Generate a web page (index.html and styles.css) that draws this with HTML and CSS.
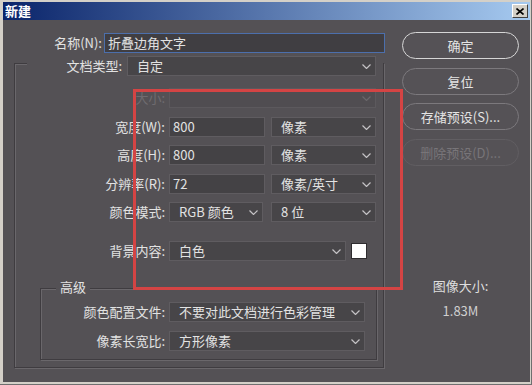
FILE: index.html
```html
<!DOCTYPE html>
<html lang="zh-CN">
<head>
  <meta charset="UTF-8">
  <title>新建</title>
  <link rel="stylesheet" href="styles.css">
</head>
<body>
  <div class="window">
    <div class="titlebar">
      <span class="title">新建</span>
      <span class="close">
        <svg viewBox="0 0 8 7" width="8" height="7"><path d="M0.5 0.5l7 6M7.5 0.5l-7 6"/></svg>
      </span>
    </div>

    <div class="dialog">
      <div class="main">
        <div class="row">
          <label class="lbl lbl-name">名称(N):</label>
          <div class="field input focused w-name">折叠边角文字</div>
        </div>

        <div class="group">
          <div class="row legend-row">
            <label class="lbl lbl-type">文档类型:</label>
            <div class="field select w-type">自定
              <svg class="chev" viewBox="0 0 9 5"><path d="M0.5 0.5l4 4 4-4"/></svg>
            </div>
          </div>

          <div class="row first-row disabled">
            <label class="lbl lbl-main">大小:</label>
            <div class="field select w-size">
              <svg class="chev" viewBox="0 0 9 5"><path d="M0.5 0.5l4 4 4-4"/></svg>
            </div>
          </div>

          <div class="row tight">
            <label class="lbl lbl-main">宽度(W):</label>
            <div class="field input w-num">800</div>
            <div class="field select w-unit">像素
              <svg class="chev" viewBox="0 0 9 5"><path d="M0.5 0.5l4 4 4-4"/></svg>
            </div>
          </div>

          <div class="row tight">
            <label class="lbl lbl-main">高度(H):</label>
            <div class="field input w-num">800</div>
            <div class="field select w-unit">像素
              <svg class="chev" viewBox="0 0 9 5"><path d="M0.5 0.5l4 4 4-4"/></svg>
            </div>
          </div>

          <div class="row tight">
            <label class="lbl lbl-main">分辨率(R):</label>
            <div class="field input w-num">72</div>
            <div class="field select w-unit">像素/英寸
              <svg class="chev" viewBox="0 0 9 5"><path d="M0.5 0.5l4 4 4-4"/></svg>
            </div>
          </div>

          <div class="row tight">
            <label class="lbl lbl-main">颜色模式:</label>
            <div class="field select w-mode">RGB 颜色
              <svg class="chev" viewBox="0 0 9 5"><path d="M0.5 0.5l4 4 4-4"/></svg>
            </div>
            <div class="field select w-unit wide-gap">8 位
              <svg class="chev" viewBox="0 0 9 5"><path d="M0.5 0.5l4 4 4-4"/></svg>
            </div>
          </div>

          <div class="row bg-row">
            <label class="lbl lbl-main">背景内容:</label>
            <div class="field select w-bg">白色
              <svg class="chev" viewBox="0 0 9 5"><path d="M0.5 0.5l4 4 4-4"/></svg>
            </div>
            <span class="swatch"></span>
          </div>

          <div class="group advanced">
            <div class="legend">高级</div>
            <div class="row adv-first">
              <label class="lbl lbl-adv">颜色配置文件:</label>
              <div class="field select w-adv">不要对此文档进行色彩管理
                <svg class="chev" viewBox="0 0 9 5"><path d="M0.5 0.5l4 4 4-4"/></svg>
              </div>
            </div>
            <div class="row adv-next">
              <label class="lbl lbl-adv">像素长宽比:</label>
              <div class="field select w-adv">方形像素
                <svg class="chev" viewBox="0 0 9 5"><path d="M0.5 0.5l4 4 4-4"/></svg>
              </div>
            </div>
          </div>
        </div>
      </div>

      <div class="side">
        <button class="btn default">确定</button>
        <button class="btn">复位</button>
        <button class="btn">存储预设(S)...</button>
        <button class="btn" disabled>删除预设(D)...</button>

        <div class="info">
          <div class="info-label">图像大小:</div>
          <div class="info-value">1.83M</div>
        </div>
      </div>

      <div class="annotation"></div>
    </div>
  </div>
</body>
</html>
```

FILE: styles.css
```css
body {
  margin: 0;
  font-family: "Noto Sans CJK SC", "Noto Sans", sans-serif;
  font-size: 13px;
  color: #e2e2e2;
}
.window {
  width: 532px;
  height: 385px;
  box-sizing: border-box;
  background: #d4d0c8;
  padding: 2px 2px 3px 3px;
  box-shadow: inset -1px -1px 0 #6f6f6f;
  display: flex;
  flex-direction: column;
}
.titlebar {
  height: 18px;
  background: linear-gradient(90deg, #0a246a, #a6caf0);
  display: flex;
  align-items: center;
  justify-content: space-between;
  padding: 0 2px 0 2px;
}
.title {
  color: #fff;
  font-weight: bold;
  font-size: 13px;
  line-height: 18px;
}
.close {
  width: 16px;
  height: 14px;
  box-sizing: border-box;
  background: #d4d0c8;
  border: 1px solid;
  border-color: #fff #404040 #404040 #fff;
  display: flex;
  align-items: center;
  justify-content: center;
}
.close svg path {
  stroke: #000;
  stroke-width: 1.6;
  fill: none;
}
.dialog {
  flex: 1;
  background: #545155;
  position: relative;
  display: flex;
}
.main {
  width: 382px;
  box-sizing: border-box;
  padding: 13px 0 0 11px;
}
.row {
  display: flex;
  align-items: center;
  height: 20px;
}
.lbl {
  text-align: right;
  white-space: nowrap;
  line-height: 20px;
  flex: none;
}
.lbl-name { width: 88px; margin-right: 2px; }
.lbl-type { width: 95px; margin-right: 5px; }
.lbl-main { width: 150px; margin-right: 4px; }
.lbl-adv { width: 124px; margin-right: 4px; }

.field {
  position: relative;
  height: 20px;
  box-sizing: border-box;
  line-height: 18px;
  background: #444245;
  border: 1px solid #5f5c60;
  white-space: nowrap;
  flex: none;
}
.input { padding-left: 3px; }
.select { padding-left: 9px; background: #474548; }
.focused { border-color: #4c6fac; background: #403e42; }
.chev {
  position: absolute;
  right: 4px;
  top: 7px;
  width: 9px;
  height: 5px;
}
.chev path {
  fill: none;
  stroke: #c4c2c5;
  stroke-width: 1.2;
}
.w-name { width: 281px; }
.w-type { width: 249px; }
.w-size { width: 207px; }
.w-num { width: 96px; }
.w-unit { width: 105px; margin-left: 6px; }
.w-unit.wide-gap { margin-left: 8px; }
.w-mode { width: 94px; }
.w-bg { width: 177px; }
.w-adv { width: 196px; }

.disabled .lbl { color: #6f6c70; }
.disabled .field { background: #504d51; border-color: #5c595d; }
.disabled .chev path { stroke: #6a676b; }

.group {
  width: 370px;
  box-sizing: border-box;
  margin-top: 10px;
  border: 1px solid #3f3c40;
  box-shadow: 1px 1px 0 #6a676b, inset 1px 1px 0 #6a676b;
  padding-bottom: 7px;
}
.legend-row {
  margin: -8px 0 0 12px;
  background: #545155;
}
.first-row { margin-top: 12px; }
.tight { margin-top: 8.5px; }
.bg-row { margin-top: 19px; }
.swatch {
  width: 16px;
  height: 16px;
  margin-left: 5px;
  background: #fff;
  box-sizing: border-box;
  border: 1px solid #2e2c2f;
}

.group.advanced {
  width: 337px;
  margin: 27px 0 0 25px;
  padding-bottom: 8px;
}
.legend {
  width: fit-content;
  margin: -12px 0 0 15px;
  padding: 0 4px;
  line-height: 20px;
  background: #545155;
}
.adv-first { margin-top: 5px; }
.adv-next { margin-top: 9px; }

.side {
  width: 117px;
  margin-left: 17px;
  padding-top: 12px;
  display: flex;
  flex-direction: column;
  gap: 8.5px;
}
.btn {
  height: 27px;
  border-radius: 14px;
  border: 1px solid #7c797d;
  background: #555256;
  color: #e4e4e4;
  font-family: inherit;
  font-size: 13px;
  padding: 0;
}
.btn.default {
  border: 1.5px solid #d6d6d6;
}
.btn:disabled {
  color: #787579;
  border-color: #615e62;
}
.info {
  margin-top: 103px;
  text-align: center;
  line-height: 18px;
}
.info-label { color: #dedede; }
.info-value { margin-top: 7px; color: #cfcfcf; }

.annotation {
  position: absolute;
  left: 130px;
  top: 69px;
  width: 270px;
  height: 201px;
  box-sizing: border-box;
  border: 3px solid #d44444;
}
```
